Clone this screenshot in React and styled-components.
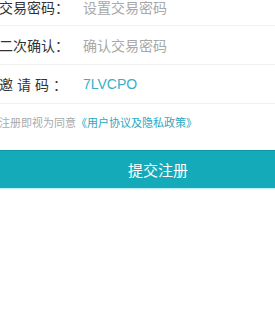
import React from "react";
import styled, { createGlobalStyle } from "styled-components";

const Global = createGlobalStyle`
  html, body { margin: 0; padding: 0; background: #fff; }
  body { font-family: "Noto Sans CJK SC", "Noto Sans", sans-serif; overflow: hidden; }
`;

const Page = styled.div`
  width: 275px;
  height: 328px;
  overflow: hidden;
  background: #fff;
`;

const Form = styled.div`
  margin-top: -12px;
  margin-left: -1px;
  display: flex;
  flex-direction: column;
`;

const Row = styled.div`
  display: flex;
  align-items: center;
  height: ${(p) => (p.$first ? "37px" : "38px")};
  border-bottom: 1px solid #f1f1f1;
`;

const Label = styled.span`
  width: 84px;
  flex: none;
  font-size: 14px;
  color: #333;
  letter-spacing: ${(p) => (p.$spaced ? "4px" : "0")};
  white-space: nowrap;
`;

const Value = styled.span`
  font-size: 14px;
  color: ${(p) => (p.$accent ? "#38b0c8" : "#a8a8a8")};
  font-family: ${(p) =>
    p.$accent ? '"Liberation Sans", Arial, sans-serif' : "inherit"};
`;

const Tip = styled.p`
  margin: 0;
  height: 36px;
  display: flex;
  align-items: center;
  font-size: 11px;
  color: #aaa;
  white-space: nowrap;
`;

const Link = styled.span`
  color: #2aa9c2;
`;

const Submit = styled.button`
  margin-top: 10px;
  width: 100%;
  height: 38px;
  border: none;
  border-top: 1px solid #0f9aab;
  background: #14aab9;
  color: #fff;
  font-family: inherit;
  font-size: 15px;
  padding-left: 48px;
  box-shadow: 0 1px 0 #bdeff4, 0 2px 0 #eafbfd;
`;

export default function App() {
  return (
    <Page>
      <Global />
      <Form>
        <Row $first>
          <Label>交易密码：</Label>
          <Value>设置交易密码</Value>
        </Row>
        <Row>
          <Label>二次确认：</Label>
          <Value>确认交易密码</Value>
        </Row>
        <Row>
          <Label $spaced>邀请码：</Label>
          <Value $accent>7LVCPO</Value>
        </Row>
        <Tip>
          注册即视为同意<Link>《用户协议及隐私政策》</Link>
        </Tip>
        <Submit>提交注册</Submit>
      </Form>
    </Page>
  );
}
